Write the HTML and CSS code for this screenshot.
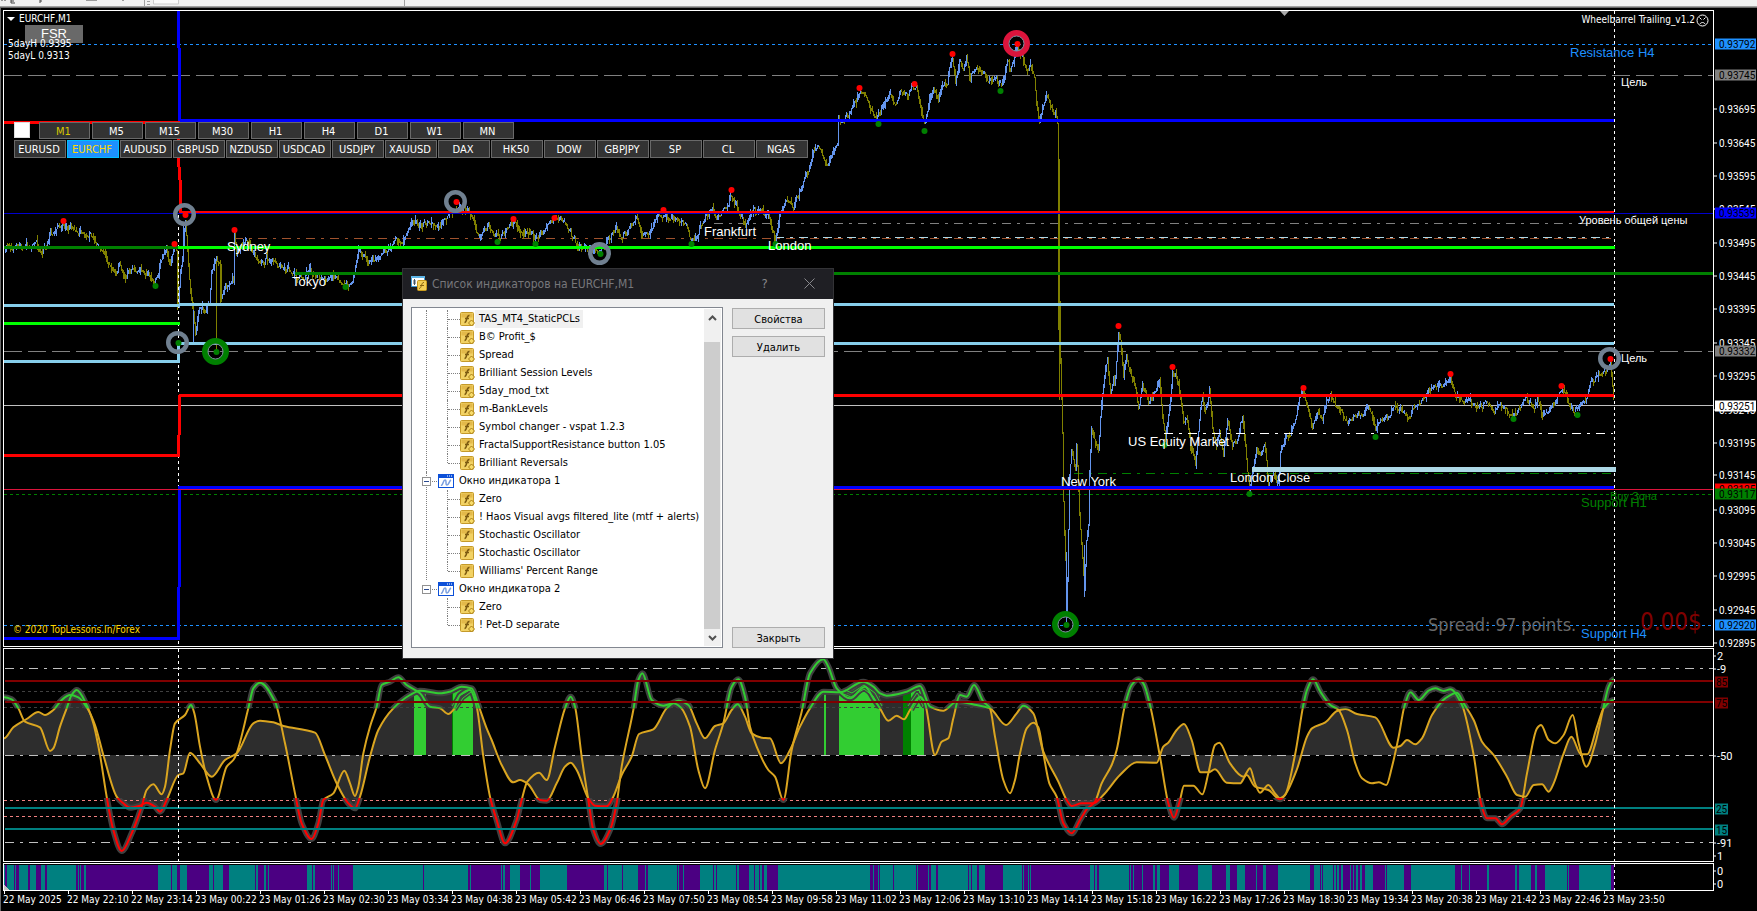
FILE: index.html
```html
<!DOCTYPE html>
<html lang="ru">
<head>
<meta charset="utf-8">
<title>EURCHF,M1</title>
<link rel="stylesheet" href="styles.css">
</head>
<body>
<header class="toolbar">
  <svg class="toolbar-art" width="420" height="6" viewBox="0 0 420 6" aria-hidden="true">
    <path d="M2 0v1M5 0v1M11 0v3h4M11 1h3M40 0v3M40 1h2M86 0h11M123 0v1" stroke="#444" fill="none"/>
    <path d="M144.5 0v6M404.5 0v6M147 1.5h3M147 4.500h3" stroke="#a0a0a0" fill="none"/>
    <path d="M153.500 0v4h25v-4" stroke="#ccc" fill="#fafafa"/>
  </svg>
</header>
<main class="workspace">
  <section class="panel price-panel" id="price">
    <svg class="plot" viewBox="4 11 1709 635" preserveAspectRatio="none" id="pricePlot"></svg>
    <div class="chart-title"><span class="caret"></span>EURCHF,M1</div>
    <button class="fsr">FSR</button>
    <div class="day-levels"><div>5dayH 0.9395</div><div>5dayL 0.9313</div></div>
    <div class="switcher">
      <div class="switch-row periods">
        <input type="checkbox" class="toggle" aria-label="Панель">
        <button class="active">M1</button><button>M5</button><button>M15</button><button>M30</button><button>H1</button><button>H4</button><button>D1</button><button>W1</button><button>MN</button>
      </div>
      <div class="switch-row symbols">
        <button>EURUSD</button><button class="active">EURCHF</button><button>AUDUSD</button><button>GBPUSD</button><button>NZDUSD</button><button>USDCAD</button><button>USDJPY</button><button>XAUUSD</button><button>DAX</button><button>HK50</button><button>DOW</button><button>GBPJPY</button><button>SP</button><button>CL</button><button>NGAS</button>
      </div>
    </div>
    <div class="expert">Wheelbarrel Trailing_v1.2
      <svg width="13" height="13" viewBox="0 0 13 13" fill="none" stroke="#fff" aria-hidden="true"><circle cx="6.500" cy="6.500" r="5.500"/><path d="M4 10c1-2 4-2 5 0M3.500 3.500l2 2M9.500 3.500l-2 2"/></svg>
    </div>
    <div class="copyright">© 2020 TopLessons.In/Forex</div>
  </section>
  <aside class="scale" id="priceScale"></aside>
  <section class="panel" id="osc">
    <svg class="plot" viewBox="4 649 1709 212" preserveAspectRatio="none" id="oscPlot"></svg>
  </section>
  <aside class="scale" id="oscScale"></aside>
  <section class="panel" id="hist">
    <svg class="plot" viewBox="4 864 1709 26" preserveAspectRatio="none" id="histPlot"></svg>
  </section>
  <aside class="scale" id="histScale"></aside>
  <footer class="time-axis" id="timeAxis"></footer>

  <section class="dialog" role="dialog" aria-labelledby="dlgTitle">
    <header class="dialog-head">
      <svg width="17" height="16" viewBox="0 0 17 16" aria-hidden="true">
        <path d="M.5.500h13v10h-13z" fill="#fff" stroke="#3f9bd8"/><path d="M0 0h14v2H0z" fill="#5db5e8"/>
        <path d="M3.500 3v6M2 5h3M2 7h3M7 5h4" stroke="#456" fill="none"/>
        <rect x="6.500" y="4.500" width="9" height="10" rx="1" fill="#f3cf55" stroke="#c99a1c"/>
        <path d="M13 6.500c-3-.5-2 6-5 6M9 9.500h4" stroke="#8a6410" fill="none"/>
      </svg>
      <h1 id="dlgTitle">Список индикаторов на EURCHF,M1</h1>
      <button class="help" aria-label="Справка">?</button>
      <button class="close" aria-label="Закрыть окно"><svg width="11" height="11" viewBox="0 0 11 11" stroke="#88888c" fill="none"><path d="M.5.500l10 10M10.500.500l-10 10"/></svg></button>
    </header>
    <div class="dialog-body">
      <div class="list">
        <ul class="tree" id="tree"></ul>
        <div class="scrollbar" aria-hidden="true">
          <span class="arrow"><svg width="9" height="6" viewBox="0 0 9 6" fill="none" stroke="#505050" stroke-width="2"><path d="M1 5l3.500-3.500L8 5"/></svg></span>
          <span class="thumb"></span>
          <span class="arrow"><svg width="9" height="6" viewBox="0 0 9 6" fill="none" stroke="#505050" stroke-width="2"><path d="M1 1l3.500 3.500L8 1"/></svg></span>
        </div>
      </div>
      <div class="actions">
        <button>Свойства</button>
        <button>Удалить</button>
        <button class="last">Закрыть</button>
      </div>
    </div>
  </section>
</main>
<script src="chart.js"></script>
</body>
</html>
```

FILE: styles.css
```css
:root {
  --ui: "DejaVu Sans Condensed", "Noto Sans", sans-serif;
  --axis: Roboto, "Liberation Sans", sans-serif;
  --arial: "Liberation Sans", Arial, sans-serif;
}
* { box-sizing: border-box; }
body {
  margin: 0;
  height: 100vh;
  display: flex;
  flex-direction: column;
  background: #000;
  color: #fff;
  font: 11px/12px var(--ui);
  overflow: hidden;
}
button { font: inherit; padding: 0; margin: 0; cursor: pointer; }
.toolbar {
  flex: none;
  height: 8px;
  background: #f0f0f0;
  border-bottom: 1px solid #696969;
  box-shadow: inset 0 -1px #a0a0a0;
}
.toolbar-art { display: block; }
.workspace {
  flex: 1;
  min-height: 0;
  position: relative;
  display: grid;
  grid-template-columns: minmax(0, 1fr) 43px;
  grid-template-rows: minmax(0, 638fr) minmax(0, 215fr) minmax(0, 28fr) 20px;
  padding: 2px 0 0 2px;
  border-left: 1px solid #696969;
}
.panel { position: relative; border: 1px solid #fff; margin-bottom: 1px; }
#hist { margin-bottom: 0; }
.plot { display: block; position: absolute; inset: 0; width: 100%; height: 100%; }
.scale { position: relative; margin-bottom: 1px; font: 10px/11px var(--axis); }
#histScale { margin-bottom: 0; }
.tick { position: absolute; left: 5px; transform: translateY(-50%); white-space: nowrap; }
.tick::before { content: ""; position: absolute; left: -5px; top: 5px; width: 3px; height: 1px; background: #fff; }
.short { left: 3px; font-size: 11px; }
.short::before { left: -3px; width: 2px; }
.tag { left: 1px; padding-left: 4px; width: 41px; color: #000; }
.tag-short { left: 1px; padding: 0 1px; color: #000; }
.tag::before, .tag-short::before { display: none; }
.c-blue { background: #1e90ff; }
.c-gray { background: #808080; }
.c-navy { background: #00f; }
.c-white { background: #fff; }
.c-red { background: #f00; }
.c-green { background: #008000; }
.c-maroon { background: #800000; }
.c-teal { background: #008080; }

.time-axis {
  grid-column: 1 / 3;
  display: grid;
  grid-template-columns: repeat(27, minmax(0, 64fr)) minmax(0, 26fr);
  font: 10px/12px var(--ui);
}
.time-axis span { position: relative; padding-top: 3px; white-space: nowrap; }
.time-axis span::before { content: ""; position: absolute; left: 1px; top: 0; width: 1px; height: 3px; background: #fff; }

.mark { position: absolute; white-space: nowrap; font: 13px/16px var(--arial); transform: translateY(-50%); }
.note { font-size: 11px; }
.t-blue { color: #1e90ff; }
.t-green { color: #008000; }
.spread { font: 18px/22px var(--ui); color: #696969; }
.profit { font: 24px/28px var(--ui); color: #800000; }

.chart-title { position: absolute; left: 3px; top: 2px; display: flex; align-items: center; gap: 4px; font-size: 10px; }
.caret { border: 4px solid transparent; border-top-color: #fff; border-bottom: 0; }
.fsr {
  position: absolute; left: 21px; top: 14px; width: 58px; height: 18px;
  border: 0; background: #696969; color: #fff; font: 13px/18px var(--arial);
}
.day-levels { position: absolute; left: 4px; top: 27px; font: 10px/12px var(--ui); }
.expert { position: absolute; right: 4px; top: 2px; display: flex; align-items: center; gap: 1px; font: 10px/14px var(--ui); }
.copyright { position: absolute; left: 9px; bottom: 10px; font-size: 10px; color: #ffd700; }
.switcher { position: absolute; left: 10px; top: 111px; display: grid; gap: 1px; }
.switch-row { display: flex; gap: 1px; }
.switch-row button {
  width: 52px; height: 18px; background: #333; color: #fff; line-height: 18px;
  border: 1px solid #696969; padding-right: 2px;
}
.periods button { width: 51px; height: 17px; margin-right: 1px; line-height: 17px; }
.switch-row .active { color: #ffd700; }
.periods .active { color: #d8c800; }
.symbols .active { background: #1e90ff; border-color: #00bfff; }
.toggle { appearance: none; width: 16px; height: 16px; margin: 0 8px 0 0; background: #fff; border: 1px solid #ddd; }

.dialog {
  position: absolute; left: 401px; top: 260px; width: 432px;
  border: 1px solid #333336; background: #f0f0f0; color: #000;
}
.dialog-head { display: flex; align-items: center; height: 30px; padding-left: 8px; background: #1f1f24; color: #77777b; }
.dialog-head h1 { margin: 0 0 0 4px; flex: 1; font: 12px/16px var(--ui); }
.dialog-head button { background: none; border: 0; color: #88888c; font-size: 13px; width: 45px; height: 30px; }
.dialog-head .close { margin-right: 1px; }
.dialog-body { display: flex; gap: 9px; padding: 8px 8px 10px; }
.list { flex: 1; display: flex; height: 341px; padding: 1px; border: 1px solid #828790; background: #fff; }
.tree { flex: 1; margin: 0; padding: 1px 0 0 13px; list-style: none; }
.tree ul { margin: 0; padding: 0 0 0 21px; list-style: none; position: relative; }
.tree li { position: relative; }
.row { display: flex; align-items: center; height: 18px; }
.row svg { flex: none; }
.name { padding: 0 3px 0 4px; line-height: 18px; white-space: nowrap; }
.selected { background: #f0f0f0; }
.leaf::before { content: ""; width: 12px; flex: none; border-top: 1px dotted #808080; }
.leaf { border-left: 1px dotted #808080; }
.tree ul li:last-child .leaf { border-left-color: transparent; }
.tree ul li:last-child::before { content: ""; position: absolute; left: 0; top: 0; height: 9px; border-left: 1px dotted #808080; }
.group:not(:last-child)::before { content: ""; position: absolute; left: 0; top: 0; height: 100%; border-left: 1px dotted #808080; }
.expander { position: relative; width: 9px; height: 9px; margin-left: -4px; border: 1px solid #919191; background: #fff; }
.expander::before { content: ""; position: absolute; left: 1px; top: 3px; width: 5px; height: 1px; background: #2a4a90; }
.expander::after { content: ""; position: absolute; left: 9px; top: 3px; width: 5px; border-top: 1px dotted #808080; }
.node { gap: 7px; }
.node .name { padding-left: 0; margin-left: -2px; }
.scrollbar { width: 17px; display: flex; flex-direction: column; background: #f0f0f0; }
.arrow { height: 17px; display: grid; place-items: center; }
.thumb { flex: 1; margin: 16px 1px 0 0; background: #cdcdcd; }
.actions { width: 93px; display: flex; flex-direction: column; gap: 7px; padding-top: 1px; }
.actions button { height: 21px; border: 1px solid #adadad; background: #e1e1e1; color: #000; line-height: 21px; }
.actions .last { margin-top: auto; }
```

FILE: chart.js
```js
const el = id => document.getElementById(id);
const line = (x1, y1, x2, y2, color, w = 1, dash = '') =>
  `<path d="M${x1} ${y1}L${x2} ${y2}" stroke="${color}" stroke-width="${w}" stroke-dasharray="${dash}"/>`;
const poly = (pts, color, w) => `<path d="M${pts}" fill="none" stroke="${color}" stroke-width="${w}"/>`;

/* Price path: x, y pairs */
const path = [4,252,8,246,12,250,16,244,20,247,26,243,30,247,36,240,40,252,46,248,50,235,54,232,58,227,63,224,70,228,76,230,85,234,90,235,95,240,100,250,105,257,110,265,116,275,119,263,124,280,130,268,136,270,143,270,148,278,154,284,158,275,162,255,166,250,170,264,174,247,177,252,178,305,180,275,182,255,185,218,187,250,190,290,193,310,195,335,197,318,199,308,205,312,209,303,211,270,214,265,216,259,220,262,221,295,225,285,230,285,232,275,233,285,234,233,236,255,240,245,245,240,250,250,256,258,262,265,266,257,272,260,280,266,290,270,296,278,304,278,309,270,318,275,326,283,332,275,345,286,352,280,358,252,364,255,370,262,376,257,382,255,388,248,394,240,400,243,406,235,412,223,416,220,420,227,426,224,432,223,438,227,445,218,451,212,457,206,463,208,469,211,476,230,480,237,487,226,494,235,500,237,506,230,513,222,518,228,524,235,530,232,534,238,542,232,548,223,554,220,560,219,566,225,572,238,578,247,590,248,600,250,605,245,611,235,615,228,620,235,626,235,632,222,636,218,642,235,648,234,655,222,660,215,668,217,676,219,684,222,690,238,696,238,702,222,708,215,712,208,716,218,722,210,728,204,731,195,735,202,740,215,745,226,751,210,756,212,760,210,765,215,768,215,772,230,775,240,779,215,784,203,788,200,793,210,796,195,801,190,805,177,810,165,813,150,818,144,824,160,827,165,832,155,837,143,838,118,842,122,847,115,853,105,857,98,860,92,865,96,870,108,877,118,882,108,889,93,894,105,900,92,906,95,912,88,916,88,919,105,924,124,928,105,933,88,938,100,942,88,947,83,949,68,952,60,955,82,959,60,963,70,966,58,970,78,976,67,980,70,986,78,990,80,996,80,1001,86,1003,80,1007,62,1010,70,1013,58,1017,48,1021,57,1026,70,1030,65,1034,78,1037,110,1039,122,1043,105,1046,95,1050,105,1055,115,1057,122,1058,160,1059,300,1060,360,1062,430,1063,500,1065,560,1066,615,1067,580,1069,480,1071,450,1075,470,1076,445,1079,510,1082,560,1083,575,1084,592,1086,540,1088,525,1089,470,1091,430,1095,445,1098,450,1100,415,1103,385,1107,360,1110,395,1113,380,1114,388,1118,332,1120,340,1123,378,1126,354,1130,375,1134,383,1138,408,1142,385,1146,395,1149,405,1152,395,1156,390,1159,382,1162,415,1165,438,1170,400,1172,372,1175,376,1179,390,1183,420,1187,420,1190,445,1195,463,1200,410,1202,397,1205,410,1209,390,1212,425,1216,445,1219,432,1223,455,1227,422,1232,445,1237,440,1242,415,1247,470,1249,490,1253,470,1256,447,1260,455,1264,442,1268,482,1273,475,1278,485,1280,452,1284,440,1290,434,1296,415,1299,397,1303,393,1308,413,1312,428,1317,412,1322,420,1326,398,1330,397,1335,405,1340,410,1347,423,1353,415,1359,418,1362,416,1368,406,1372,415,1375,430,1380,420,1387,419,1394,406,1402,410,1408,420,1414,405,1421,402,1426,392,1433,388,1440,384,1446,383,1450,379,1455,395,1462,402,1468,398,1475,409,1482,405,1488,401,1494,411,1500,405,1506,411,1513,416,1520,408,1526,397,1532,408,1537,402,1542,414,1550,408,1557,396,1562,389,1567,400,1573,411,1578,408,1585,402,1590,382,1597,378,1604,373,1610,362,1612,388,1614,404];

function candles() {
  let seed = 7, up = '', down = '';
  const rnd = () => (seed = (seed * 16807) % 2147483647) / 2147483647;
  let i = 0;
  const at = x => {
    while (i < path.length - 4 && path[i + 2] < x) i += 2;
    const t = (x - path[i]) / (path[i + 2] - path[i]);
    return path[i + 1] + (path[i + 3] - path[i + 1]) * Math.min(t, 1);
  };
  let prev = at(4), jitter = 0, bias = 0;
  for (let x = 5; x < 1614; x++) {
    if (x % 2) {
      const next = (rnd() - .5) * 5;
      bias = next - jitter;
      jitter = next;
    }
    const y = at(x) + jitter, d = y - prev;
    const wick = () => rnd() * rnd() * 7;
    const top = Math.round(Math.min(y, prev) - wick());
    const bottom = Math.max(top + 2, Math.round(Math.max(y, prev) + wick()));
    const bar = `M${x + .5} ${top}V${bottom}`;
    if ((x % 2 ? d : d + bias) < 0) up += bar; else down += bar;
    prev = y;
  }
  down += 'M216.500 257V350M1058.500 150V330M1059.500 300V400M220.500 260V303M177.500 250V310';
  up += 'M193.500 310V342M1066.500 552V622M183.500 225V262M1084.500 545V597';
  return `<path d="${down}" stroke="#808000"/><path d="${up}" stroke="#6495ed"/>`;
}

const DD = '9 6 3 6', DOT = '3 3', LONG = '18 6';
let s = '<g shape-rendering="crispEdges" fill="none">';
s += line(4,44.5,1713,44.5,'#1e90ff',1,DOT) + line(4,75.5,1713,75.5,'#808080',1,LONG) + line(4,351.5,1713,351.5,'#808080',1,LONG);
s += line(4,405.5,1713,405.5,'#c0c0c0') + line(4,494.5,1713,494.5,'#008000',1,DOT) + line(4,625.5,1713,625.5,'#1e90ff',1,DOT);
s += line(714,223.5,1613,223.5,'#808080',1,DD) + line(234,238.5,1613,238.5,'#a0522d',1,DD) + line(775,237.5,1613,237.5,'#add8e6',1,DD);
s += line(1074,473.5,1613,473.5,'#008000',1,DD);
s += candles();
s += line(178.5,215,178.5,646,'#fff',1,DOT) + line(1614.5,11,1614.5,646,'#fff',1,DOT);
s += line(1164,433.5,1613,433.5,'#fff',1,DD);
s += poly('178.500 11V46L179.500 50V120.500H1614','#0000ff',3);
s += poly('4 122.500H178.500V160L180 180V212H1614','#ff0000',3) + line(4,213.5,1713,213.5,'#0000cd');
s += line(4,247.5,179,247.5,'#008000',3) + line(178,247.5,1615,247.5,'#00ff00',3);
s += line(295,273.5,1713,273.5,'#008000',3);
s += poly('4 305.500H179L180 304.500H1614','#87ceeb',3) + line(4,323.5,180,323.5,'#00ff00',3);
s += poly('4 361.500H178.500V343.500H1614','#87ceeb',3);
s += poly('4 455.500H178.500L180 395.500H1614','#ff0000',3);
s += line(1252,469.5,1616,469.5,'#add8e6',5);
s += poly('4 638.500H178.500L180 487.500H1614','#0000ff',3) + line(4,489.5,1713,489.5,'#dc143c');
s += '</g><path d="M1280 11h9l-4.500 5z" fill="#a9a9a9"/>';
const ring = (x, y, r, w, c) => `<circle cx="${x}" cy="${y}" r="${r}" fill="none" stroke="${c}" stroke-width="${w}"/>`;
[[184.5,214.5],[177.5,342.5],[455.5,201.5],[599.5,253.5],[1609.5,358.5]].forEach(p => s += ring(...p, 9.25, 4.5, '#708090'));
[[215.5,351.5,'#008000'],[1016.5,43.5,'#dc143c'],[1065.5,624.5,'#008000']].forEach(([x,y,c]) => s += ring(x,y,10.5,6,c) + ring(x,y,7.5,1,'#8090a0'));
const dots = (pts, color) => pts.forEach((v, k) => { if (k % 2) s += `<circle cx="${pts[k-1]+.5}" cy="${v}" r="3" fill="${color}"/>`; });
dots([63,221,174,244,185,215,234,230,456,202,513,219,554,218,663,210,731,190,859,88,914,84,952,54,1017,44,1118,326,1172,367,1303,388,1450,374,1561,386,1610,359], '#ff0000');
dots([155,286,178,343,216,352,345,287,497,242,535,244,600,254,691,244,775,244,878,124,924,131,1000,91,1164,445,1249,494,1375,437,1513,419,1577,415,1066,625], '#008000');
el('pricePlot').innerHTML = s;

/* Text anchored to chart coordinates: left x, centre y */
[['Sydney',227,247],['Tokyo',292,282],['Frankfurt',704,232],['London',768,246],['US Equity Market',1128,442],['New York',1061,482],['London Close',1230,478],
 ['Resistance H4',1570,53,'t-blue'],['Support H1',1581,503,'t-green'],['Support H4',1581,634,'t-blue'],
 ['Цель',1621,82,'note'],['Цель',1621,358,'note'],['Уровень общей цены',1579,220,'note'],['Buy Зона',1610,496,'note t-green'],
 ['Spread: 97 points.',1428,625,'spread'],['0.00$',1640,622,'profit']]
.forEach(([t,x,y,c='']) => {
  el('price').insertAdjacentHTML('beforeend', `<span class="mark ${c}" style="left:${(x-4)/17.09}%;top:${(y-11)/6.35}%">${t}</span>`);
});

/* Scales */
const ticks = (id, y0, h, items) => items.forEach(([t,y,c='']) => {
  el(id).insertAdjacentHTML('beforeend', `<span class="tick ${c}" style="top:${(y-y0)/h*100}%">${t}</span>`);
});
ticks('priceScale', 10, 637, [['0.93695',108.5],['0.93645',142.5],['0.93595',175.5],['0.93545',208.5],['0.93495',242.5],['0.93445',275.5],['0.93395',308.5],['0.93345',342.5],
 ['0.93295',375.5],['0.93245',409.5],['0.93195',442.5],['0.93145',475.5],['0.93095',509.5],['0.93045',542.5],['0.92995',575.5],['0.92945',609.5],['0.92895',642.5],
 ['0.93792',43.5,'tag c-blue'],['0.93745',74.5,'tag c-gray'],['0.93539',212.5,'tag c-navy'],['0.93332',350.5,'tag c-gray'],['0.93251',405.5,'tag c-white'],
 ['0.93125',488.5,'tag c-red'],['0.93117',493.5,'tag c-green'],['0.92920',624.5,'tag c-blue']]);
ticks('oscScale', 648, 214, [['2',655.5,'short'],['-9',668.5,'short'],['85',681.5,'tag-short c-maroon'],['75',702.5,'tag-short c-maroon'],['-50',755.5,'short'],['25',808.5,'tag-short c-teal'],['15',829.5,'tag-short c-teal'],['-91',842.5,'short'],['1',855.5,'short']]);
ticks('histScale', 863, 28, [['0',870.5,'short'],['0',883.5,'short']]);
el('timeAxis').innerHTML = ['22 May 2025','22 May 22:10','22 May 23:14'].concat(
  '00:22 01:26 02:30 03:34 04:38 05:42 06:46 07:50 08:54 09:58 11:02 12:06 13:10 14:14 15:18 16:22 17:26 18:30 19:34 20:38 21:42 22:46 23:50'.split(' ').map(t => '23 May ' + t)
).map(t => `<span>${t}</span>`).join('');

/* Oscillator curves: chunks of [x offset, pairs in thirds of a unit] */
const join = chunks => chunks.flatMap(([dx, a]) => {
  const out = [];
  for (let k = 0; k < a.length; k += 2) out.push([dx + a[k] / 3, 640 + a[k+1] / 3]);
  return out;
});
const slow = join([
 [0,[12,295,40,262,80,237,115,216,135,225,160,210,185,180,210,165,235,172,262,205,285,255,310,345,350,470,370,490,390,503,420,497,440,488,465,500,480,515,500,480,535,405,550,400,570,338,600,370,635,410,675,360,710,340,760,250,780,242,820,247,850,258,945,278,975,345,1010,430,1045,490,1065,505,1080,470,1110,350,1135,270,1180,205,1230,165,1260,152]],
 [440,[0,160,30,155,65,140,95,145,115,195,140,265,155,300,185,375,220,427,240,420,265,433,300,480,320,482,350,430,375,380,392,368,410,390,445,475,465,497,500,499,520,470,545,405,575,350,597,282,640,268,680,205,715,182,745,195,770,250,795,295,825,258,850,250,875,210,893,193,915,230,935,280,965,293,990,295,1023,370,1050,330,1080,260,1110,205,1150,155,1200,157,1270,125,1300,140]],
 [880,[0,160,20,167,80,155,120,138,150,200,190,212,230,185,290,195,330,205,378,255,410,220,430,197,460,220,490,335,535,425,560,480,575,498,605,490,640,490,670,465,720,405,770,367,830,368,850,320,865,308,890,270,912,252,935,300,962,397,985,397,1005,388,1040,428,1080,430,1100,405,1125,440,1165,450,1200,478,1215,465,1250,390]],
 [1307,[0,290,15,265,55,247,90,213,115,207,150,222,205,232,260,323,280,318,300,300,325,313,345,295,375,225,415,175,450,158,470,190,500,240,525,305,560,345,600,410,630,465,655,470,680,435,705,433,725,455,740,430,770,340,793,290,822,343,840,343,870,260,890,205,920,180]]]);
const fast = join([
 [0,[12,172,35,178,55,205,75,245,120,262,150,333,160,325,180,260,200,205,215,165,230,150,260,195,280,250,300,345,320,470,340,570,365,633,395,580,425,500,440,450,460,433,485,463,495,440,510,330,525,250,555,225,573,195,583,220,600,320,620,410,648,480,680,380,700,360,710,340,745,205,760,145,780,128,825,185,855,310,885,460,905,550,935,597,955,550,970,480,1000,460,1033,392,1050,430,1065,468,1075,440,1090,340,1110,260,1130,200,1145,135,1170,125,1195,112,1220,135,1260,160,1290,200]],
 [440,[0,205,25,222,40,210,60,165,90,150,110,200,130,350,150,470,170,540,195,610,230,540,245,480,262,425,297,398,320,420,345,320,375,205,392,170,405,200,425,350,445,480,460,570,482,612,510,570,530,490,545,380,580,210,595,120,607,100,635,180,670,197,700,190,720,200,750,260,775,390,795,445,825,330,850,250,875,140,895,118,915,170,930,260,950,320,985,390,1005,410,1030,480,1055,330,1085,215,1110,100,1150,58,1165,80,1190,145,1230,175,1275,140,1300,175]],
 [880,[0,205,25,242,50,227,72,238,90,210,120,170,135,190,165,345,185,305,205,295,220,235,240,165,260,170,282,135,310,185,330,205,345,290,370,420,390,460,405,420,420,340,440,265,460,248,475,262,490,340,508,430,530,470,550,550,575,580,600,540,620,508,645,485,665,430,695,375,710,330,735,195,755,135,775,118,790,130,810,195,840,350,865,490,882,533,900,480,912,437,940,437,967,463,985,400,1005,315,1018,308,1050,370,1090,410,1110,385,1125,430,1140,458,1165,435,1185,460,1200,475,1215,465,1245,345,1270,195]],
 [1307,[0,150,18,118,40,155,70,195,95,210,120,270,145,370,165,415,195,430,215,427,238,435,255,380,275,290,292,200,310,157,335,180,365,152,385,145,410,153,430,148,465,195,500,345,522,490,540,535,565,535,585,553,610,530,640,505,660,400,690,265,702,255,725,300,745,310,770,285,797,225,815,310,838,380,865,310,890,200,905,140,920,118]]]);
/* Monotone cubic smoothing through the points */
function smooth(p) {
  const n = p.length, m = [];
  const sl = k => (p[k+1][1] - p[k][1]) / (p[k+1][0] - p[k][0]);
  for (let k = 0; k < n; k++) {
    if (k === 0 || k === n - 1) { m.push(0); continue; }
    const a = sl(k-1), b = sl(k);
    m.push(a * b <= 0 ? 0 : 2 * a * b / (a + b));
  }
  let d = `${p[0][0]} ${p[0][1]}`;
  for (let k = 0; k < n - 1; k++) {
    const h = (p[k+1][0] - p[k][0]) / 3;
    d += `C${p[k][0]+h} ${p[k][1]+m[k]*h} ${p[k+1][0]-h} ${p[k+1][1]-m[k+1]*h} ${p[k+1][0]} ${p[k+1][1]}`;
  }
  return d;
}
const S = smooth(slow), F = smooth(fast);
const area = `M${S}L1614 755H4z`;
const strands = 'M452 706L459 696L468 691M455 710L463 698L471 692M841 693L851 697L864 689L873 696L880 708M845 690L852 693L864 685L875 693L882 706M908 706L917 693L922 700M912 710L919 698L923 706';
let o = `<defs><clipPath id="top"><path d="M0 640H1760V708.500H0z"/></clipPath><clipPath id="mid"><path d="M0 708.500H1760V798H0z"/></clipPath>
<clipPath id="low"><path d="M0 798H1760V870H0z"/></clipPath><clipPath id="fill"><path d="${area}"/></clipPath></defs>`;
o += `<path d="${area}" fill="#2d2d2d"/>`;
o += '<g clip-path="url(#fill)" fill="#32cd32"><path d="M414 660h12v95h-12zM453 660h20v95h-20zM824 660h2v95h-2zM839 660h41v95h-41zM911 660h13v95h-13z"/><path d="M452 660h1v95h-1zM903 660h8v95h-8z" fill="#008000"/></g>';
o += '<g shape-rendering="crispEdges">';
o += [668.5,755.5,842.5].map(y => line(5,y,1713,y,'#c0c0c0',1,DD)).join('');
o += [691.5,707.5].map(y => line(4,y,1613,y,'#404040',1,DOT)).join('');
o += [800.5,816.5].map(y => line(4,y,1613,y,'#f08080',1,DOT)).join('');
o += '</g><g fill="none" stroke-linejoin="round">';
['top','low'].forEach(z => o += `<g clip-path="url(#${z})" stroke="#404040" stroke-width="6"><path d="M${S}"/><path d="M${F}"/></g>`);
o += `<path d="${strands}" stroke="#404040" stroke-width="4"/><path d="${strands}" stroke="#32cd32"/>`;
[['top','#32cd32'],['mid','#daa520'],['low','#ff0000']].forEach(([z,c]) =>
  o += `<g clip-path="url(#${z})" stroke="${c}" stroke-width="2"><path d="M${S}"/><path d="M${F}"/></g>`);
o += '</g><g shape-rendering="crispEdges">';
o += [681,702].map(y => line(5,y,1713,y,'#800000',2)).join('') + [808,829].map(y => line(5,y,1713,y,'#008080',2)).join('');
o += line(178.5,649,178.5,861,'#fff',1,DOT) + line(1614.5,649,1614.5,861,'#fff',1,DOT) + '</g>';
el('oscPlot').innerHTML = o;

/* Two-colour strip: segments in thirds of a unit */
const strip = [
 [0,[15,21,43,46,48,57,84,90,108,123,135,141,228,234,237,240,243,252,258,474,513,516,531,540,561,627,639,642,669,687,765,768,774,792,798,804,807,921,936,939,945,993,996,999,1002,1014,1017,1059,1269,1272]],
 [1320,[84,90,93,183,186,189,195,210,240,270,273,300,381,492,501,504,546,549,594,615,618,624,711,714,717,729,732,780,819,822,828,831,888,891,897,927,942,945,957,960,966,972,981,1014,1290,1299,1302,1314,1317,1320]],
 [2640,[39,42,108,111,114,144,147,153,168,174,264,267,273,276,291,297,315,369,426,429,432,444,447,450,453,630,642,645,651,657,747,750,753,759,762,786,789,819,825,831,840,867,897,954,996,1038,1050,1071,1095,1128,1131,1149,1158,1194,1290,1302,1320,1323,1326,1329]],
 [3921,[39,42,45,48,78,81,87,90,96,102,108,129,132,138,141,147,153,159,165,174,198,234,237,240,291,312,444,462,465,486,489,540,546,624,630,636,672,684,690,714,780,783,786,816,912,921]]];
let h = '<g shape-rendering="crispEdges"><path d="M4 865H1614V890H4z" fill="#008080"/><path fill="#4b0082" d="';
strip.forEach(([dx,a]) => { for (let k = 0; k < a.length; k += 2) h += `M${Math.round((dx+a[k])/3)} 865H${Math.round((dx+a[k+1])/3)}V890H${Math.round((dx+a[k])/3)}z`; });
h += '"/>' + line(1614.5,864,1614.5,890,'#fff',1,DOT) + '<path d="M4 885l5 5H4z" fill="#c0c0c0"/></g>';
el('histPlot').innerHTML = h;

/* Indicator tree */
const fIcon = custom => `<svg width="15" height="15" viewBox="0 0 15 15"><rect x=".5" y=".5" width="13" height="13" rx="1" fill="#f2d264" stroke="#c59a2a"/><path d="M1.500 1.500h11v4h-11z" fill="#e3b94a"/><path d="M9.500 3.500c-3.500-.8-2 7-5 7M5 6.500h4" stroke="#7c5a10" stroke-width="1.500" fill="none"/>${custom ? '<path d="M11.500 8l3 3-3 3-3-3z" fill="#f8dc6a" stroke="#a87c14"/>' : ''}</svg>`;
const wIcon = '<svg width="16" height="15" viewBox="0 0 16 15"><rect x=".5" y=".5" width="15" height="13" fill="#fff" stroke="#0c50d8"/><path d="M0 0h16v4H0z" fill="#0c50d8"/><path d="M9 2h1M11 2h1M13 2h1" stroke="#fff"/><path d="M3 11c2 1 2-5 4-5s0 5 2 5 2-4 4-5" stroke="#7a9fe0" stroke-width="1.500" fill="none"/></svg>';
const leaf = ([t,std,sel]) => `<li><div class="row leaf">${fIcon(!std)}<span class="name${sel ? ' selected' : ''}">${t}</span></div></li>`;
const node = (t, items) => `<li class="group">${t ? `<div class="row node"><span class="expander"></span>${wIcon}<span class="name">${t}</span></div>` : ''}<ul>${items.map(leaf).join('')}</ul></li>`;
el('tree').innerHTML =
  node('', [['TAS_MT4_StaticPCLs',0,1],['B© Profit_$'],['Spread'],['Brilliant Session Levels'],['5day_mod_txt'],['m-BankLevels'],['Symbol changer - vspat 1.2.3'],['FractalSupportResistance button 1.05'],['Brilliant Reversals']]) +
  node('Окно индикатора 1', [['Zero'],['! Haos Visual avgs filtered_lite (mtf + alerts)'],['Stochastic Oscillator',1],['Stochastic Oscillator',1],["Williams' Percent Range",1]]) +
  node('Окно индикатора 2', [['Zero'],['! Pet-D separate']]);
```
